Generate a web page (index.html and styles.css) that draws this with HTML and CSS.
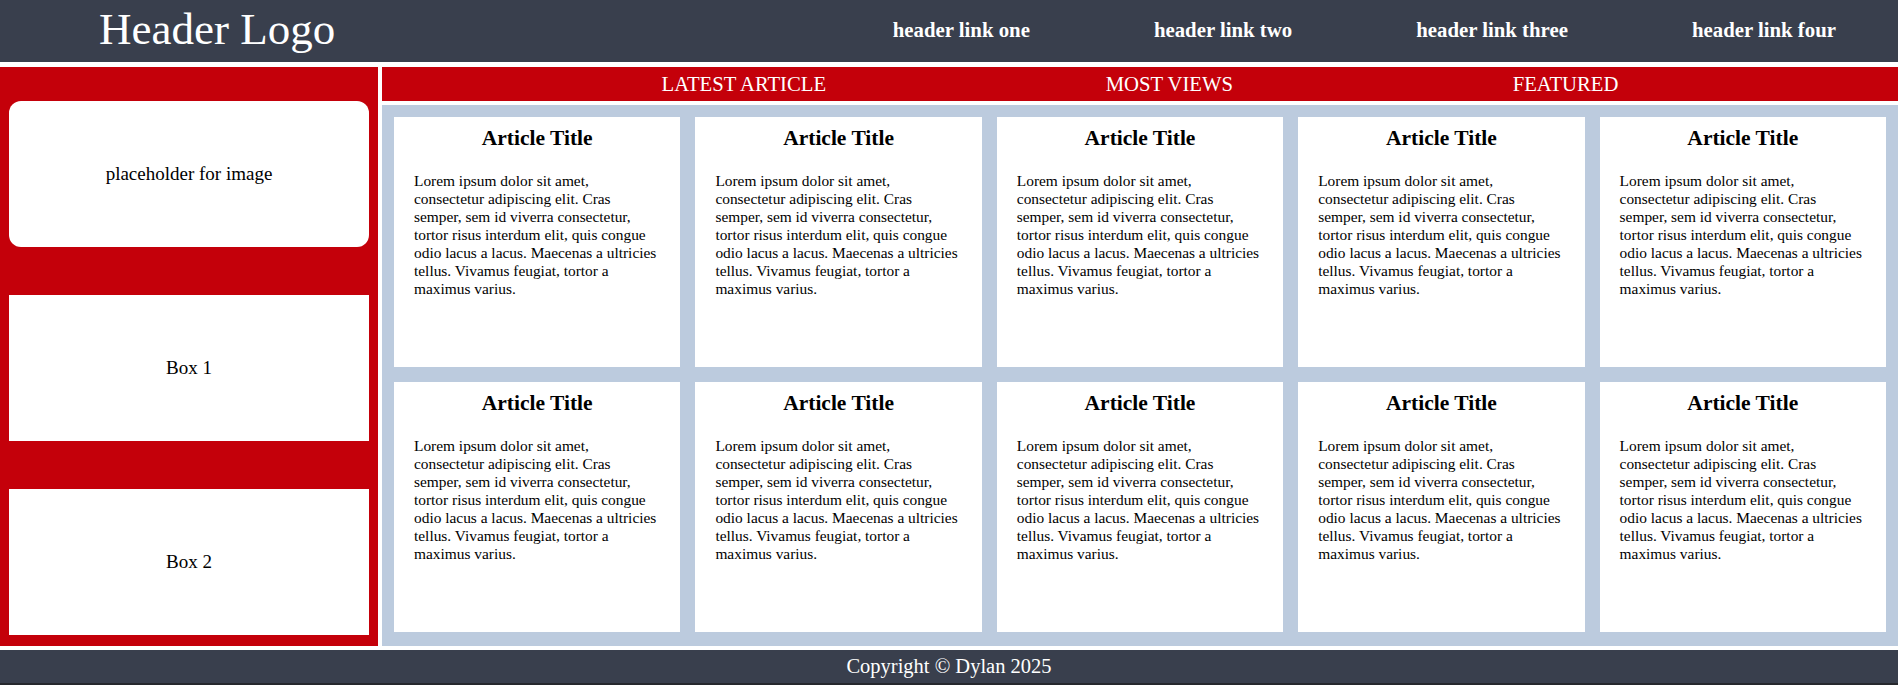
FILE: index.html
```html
<!DOCTYPE html>
<html lang="en">
<head>
<meta charset="utf-8">
<title>Header Logo</title>
<link rel="stylesheet" href="styles.css">
</head>
<body>
<div class="page">
  <header class="site-header">
    <div class="logo">Header Logo</div>
    <nav class="nav">
      <a class="nav-link" href="#">header link one</a>
      <a class="nav-link" href="#">header link two</a>
      <a class="nav-link" href="#">header link three</a>
      <a class="nav-link" href="#">header link four</a>
    </nav>
  </header>
  <div class="main">
    <aside class="sidebar">
      <div class="side-box rounded">placeholder for image</div>
      <div class="side-box">Box 1</div>
      <div class="side-box">Box 2</div>
    </aside>
    <section class="content">
      <div class="tabs">
        <span class="tab">LATEST ARTICLE</span>
        <span class="tab">MOST VIEWS</span>
        <span class="tab">FEATURED</span>
      </div>
      <div class="grid">
        <article class="card"><h2 class="card-title">Article Title</h2><p class="card-text">Lorem ipsum dolor sit amet, consectetur adipiscing elit. Cras semper, sem id viverra consectetur, tortor risus interdum elit, quis congue odio lacus a lacus. Maecenas a ultricies tellus. Vivamus feugiat, tortor a maximus varius.</p></article>
        <article class="card"><h2 class="card-title">Article Title</h2><p class="card-text">Lorem ipsum dolor sit amet, consectetur adipiscing elit. Cras semper, sem id viverra consectetur, tortor risus interdum elit, quis congue odio lacus a lacus. Maecenas a ultricies tellus. Vivamus feugiat, tortor a maximus varius.</p></article>
        <article class="card"><h2 class="card-title">Article Title</h2><p class="card-text">Lorem ipsum dolor sit amet, consectetur adipiscing elit. Cras semper, sem id viverra consectetur, tortor risus interdum elit, quis congue odio lacus a lacus. Maecenas a ultricies tellus. Vivamus feugiat, tortor a maximus varius.</p></article>
        <article class="card"><h2 class="card-title">Article Title</h2><p class="card-text">Lorem ipsum dolor sit amet, consectetur adipiscing elit. Cras semper, sem id viverra consectetur, tortor risus interdum elit, quis congue odio lacus a lacus. Maecenas a ultricies tellus. Vivamus feugiat, tortor a maximus varius.</p></article>
        <article class="card"><h2 class="card-title">Article Title</h2><p class="card-text">Lorem ipsum dolor sit amet, consectetur adipiscing elit. Cras semper, sem id viverra consectetur, tortor risus interdum elit, quis congue odio lacus a lacus. Maecenas a ultricies tellus. Vivamus feugiat, tortor a maximus varius.</p></article>
        <article class="card"><h2 class="card-title">Article Title</h2><p class="card-text">Lorem ipsum dolor sit amet, consectetur adipiscing elit. Cras semper, sem id viverra consectetur, tortor risus interdum elit, quis congue odio lacus a lacus. Maecenas a ultricies tellus. Vivamus feugiat, tortor a maximus varius.</p></article>
        <article class="card"><h2 class="card-title">Article Title</h2><p class="card-text">Lorem ipsum dolor sit amet, consectetur adipiscing elit. Cras semper, sem id viverra consectetur, tortor risus interdum elit, quis congue odio lacus a lacus. Maecenas a ultricies tellus. Vivamus feugiat, tortor a maximus varius.</p></article>
        <article class="card"><h2 class="card-title">Article Title</h2><p class="card-text">Lorem ipsum dolor sit amet, consectetur adipiscing elit. Cras semper, sem id viverra consectetur, tortor risus interdum elit, quis congue odio lacus a lacus. Maecenas a ultricies tellus. Vivamus feugiat, tortor a maximus varius.</p></article>
        <article class="card"><h2 class="card-title">Article Title</h2><p class="card-text">Lorem ipsum dolor sit amet, consectetur adipiscing elit. Cras semper, sem id viverra consectetur, tortor risus interdum elit, quis congue odio lacus a lacus. Maecenas a ultricies tellus. Vivamus feugiat, tortor a maximus varius.</p></article>
        <article class="card"><h2 class="card-title">Article Title</h2><p class="card-text">Lorem ipsum dolor sit amet, consectetur adipiscing elit. Cras semper, sem id viverra consectetur, tortor risus interdum elit, quis congue odio lacus a lacus. Maecenas a ultricies tellus. Vivamus feugiat, tortor a maximus varius.</p></article>
      </div>
    </section>
  </div>
  <footer class="site-footer">Copyright © Dylan 2025</footer>
  <div class="bottom-strip"></div>
</div>
</body>
</html>
```
FILE: styles.css
```css
html, body {
  margin: 0;
  padding: 0;
  background: #ffffff;
}

body {
  font-family: "Liberation Serif", "Times New Roman", serif;
  color: #000000;
}

.page {
  margin-right: 2px;
  display: flex;
  flex-direction: column;
}

.site-header {
  height: 62px;
  background: #393f4d;
  display: flex;
  align-items: flex-start;
  margin-bottom: 5px;
}

.logo {
  padding-left: 99px;
  padding-top: 4px;
  font-size: 45px;
  line-height: 50px;
  color: #ffffff;
}

.nav {
  margin-left: auto;
  display: flex;
  padding-top: 18px;
}

.nav-link {
  padding: 0 62px;
  font-size: 20.8px;
  line-height: 24px;
  font-weight: bold;
  color: #ffffff;
  text-decoration: none;
}

.main {
  height: 579px;
  display: flex;
  gap: 4px;
}

.sidebar {
  width: 378px;
  flex: 0 0 378px;
  background: #c4000a;
  padding: 34px 0 11px;
  box-sizing: border-box;
  display: flex;
  flex-direction: column;
  align-items: center;
  gap: 48px;
}

.side-box {
  width: 95%;
  height: 146px;
  background: #ffffff;
  display: flex;
  align-items: center;
  justify-content: center;
  font-size: 19px;
}

.side-box.rounded {
  border-radius: 12px;
}

.content {
  flex: 1;
  display: flex;
  flex-direction: column;
  gap: 4px;
}

.tabs {
  height: 34px;
  background: #c4000a;
  display: flex;
  justify-content: space-evenly;
  align-items: center;
}

.tab {
  font-size: 20.7px;
  line-height: 34px;
  color: #ffffff;
}

.grid {
  flex: 1;
  background: #bccbde;
  padding: 12px 12px 14px;
  display: grid;
  grid-template-columns: repeat(5, 1fr);
  grid-template-rows: 250px 250px;
  gap: 15px;
}

.card {
  background: #ffffff;
  padding: 9px 20px 0;
}

.card-title {
  margin: 0 0 21px;
  font-size: 21.5px;
  line-height: 25px;
  font-weight: bold;
  text-align: center;
}

.card-text {
  margin: 0;
  font-size: 15.4px;
  line-height: 18px;
}

.site-footer {
  margin-top: 4px;
  height: 33px;
  background: #393f4d;
  color: #ffffff;
  font-size: 20.5px;
  line-height: 33px;
  text-align: center;
}

.bottom-strip {
  height: 2px;
  background: #26282d;
}
```
